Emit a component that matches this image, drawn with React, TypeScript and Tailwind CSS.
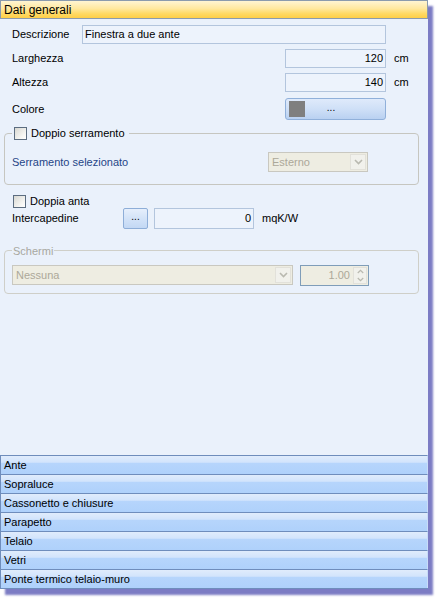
import React from 'react';

const font = { fontFamily: '"Liberation Sans", Arial, sans-serif' };

const sections = ['Ante', 'Sopraluce', 'Cassonetto e chiusure', 'Parapetto', 'Telaio', 'Vetri', 'Ponte termico telaio-muro'];

const Chevron: React.FC<{ up?: boolean; className?: string }> = ({ up, className }) => (
  <svg width="9" height="6" viewBox="0 0 9 6" className={className}>
    <polyline
      points={up ? '1,5 4.5,1.5 8,5' : '1,1 4.5,4.5 8,1'}
      fill="none"
      stroke="#b9b9b0"
      strokeWidth="1.6"
    />
  </svg>
);

const Checkbox: React.FC = () => (
  <span className="inline-block w-[13px] h-[13px] border border-[#5c6d80] bg-[linear-gradient(135deg,#d8d8d2,#f6f6f3_70%,#ffffff)]" />
);

const TextBox: React.FC<{ value: string; className: string; right?: boolean }> = ({ value, className, right }) => (
  <div
    className={`flex items-center border border-[#b3c5dd] bg-[#edf3fc] px-[2px] ${right ? 'justify-end' : ''} ${className}`}
  >
    {value}
  </div>
);

const DisabledSelect: React.FC<{ value: string; className: string }> = ({ value, className }) => (
  <div className={`flex items-stretch border border-[#c9c8c0] bg-[#eeede2] ${className}`}>
    <span className="flex-1 flex items-center pl-[3px] text-[#aca899]">{value}</span>
    <span className="w-[16px] m-[1px] flex items-center justify-center bg-[#f1f1ec] border border-[#e2e1da]">
      <Chevron />
    </span>
  </div>
);

const DotsButton: React.FC<{ className: string }> = ({ className }) => (
  <div
    className={`flex items-center justify-center rounded-[2px] border border-[#8eaed8] bg-[linear-gradient(#e6effc,#d3e3f8_50%,#c3d8f4)] text-[10px] leading-none pb-[3px] ${className}`}
  >
    ...
  </div>
);

export default function App() {
  return (
    <div className="w-[440px] h-[601px] bg-white text-[11px] text-black" style={font}>
      <div className="w-[428px] h-[589px] flex flex-col bg-[#eaf1fb] shadow-[5px_6px_2px_rgba(110,110,190,0.9)]">
        <div className="h-[19px] flex items-center pl-[3px] border border-[#8b9bad] bg-[linear-gradient(#fff5d3,#ffe89e_45%,#ffd963_75%,#ffcf47)] text-[12px]">
          Dati generali
        </div>

        <div className="flex-1 flex flex-col">
          <div className="mt-[6px] h-[19px] flex items-center pl-[12px]">
            <span className="w-[70px]">Descrizione</span>
            <TextBox value="Finestra a due ante" className="w-[304px] h-[19px]" />
          </div>

          <div className="mt-[5px] h-[19px] flex items-center pl-[12px]">
            <span className="w-[273px]">Larghezza</span>
            <TextBox value="120" right className="w-[101px] h-[19px]" />
            <span className="ml-[8px]">cm</span>
          </div>

          <div className="mt-[5px] h-[19px] flex items-center pl-[12px]">
            <span className="w-[273px]">Altezza</span>
            <TextBox value="140" right className="w-[101px] h-[19px]" />
            <span className="ml-[8px]">cm</span>
          </div>

          <div className="mt-[6px] h-[22px] flex items-center pl-[12px]">
            <span className="w-[273px]">Colore</span>
            <div className="w-[101px] h-[22px] flex items-center rounded-[3px] border border-[#90b0da] bg-[linear-gradient(#dfeafb,#cfe0f7_50%,#b9d1f1)] pl-[3px]">
              <span className="w-[16px] h-[16px] bg-[#7f7f7f]" />
              <span className="flex-1 text-center text-[10px] pb-[4px] pr-[28px]">...</span>
            </div>
          </div>

          <fieldset className="mt-[6px] ml-[4px] w-[415px] rounded-[4px] border border-[#c6c6c0] pl-[7px] pb-[12px]">
            <legend className="flex items-center gap-[4px] pl-[2px] pr-[4px] h-[14px]">
              <Checkbox />
              <span>Doppio serramento</span>
            </legend>
            <div className="mt-[12px] flex items-center h-[20px]">
              <span className="w-[256px] text-[#1f4587]">Serramento selezionato</span>
              <DisabledSelect value="Esterno" className="w-[100px] h-[20px]" />
            </div>
          </fieldset>

          <div className="mt-[9px] h-[14px] flex items-center gap-[4px] pl-[13px]">
            <Checkbox />
            <span>Doppia anta</span>
          </div>

          <div className="h-[21px] flex items-center pl-[12px]">
            <span className="w-[111px]">Intercapedine</span>
            <DotsButton className="w-[25px] h-[21px]" />
            <TextBox value="0" right className="ml-[6px] w-[100px] h-[21px]" />
            <span className="ml-[8px]">mqK/W</span>
          </div>

          <fieldset className="mt-[14px] ml-[4px] w-[415px] rounded-[4px] border border-[#cfcfc8] pl-[7px] pb-[7px]">
            <legend className="px-[1px] h-[14px] text-[#a8a8a0]">Schermi</legend>
            <div className="mt-[7px] flex items-center gap-[7px]">
              <DisabledSelect value="Nessuna" className="w-[281px] h-[20px]" />
              <div className="mt-[1px] w-[69px] h-[21px] flex items-stretch border border-[#7f9db9] bg-[#eeede2]">
                <span className="flex-1 flex items-center justify-end pr-[2px] text-[#aca899]">1.00</span>
                <span className="w-[14px] m-[1px] flex flex-col bg-[#f1f1ec] border border-[#e2e1da]">
                  <span className="flex-1 flex items-center justify-center"><Chevron up className="w-[7px] h-[5px]" /></span>
                  <span className="flex-1 flex items-center justify-center"><Chevron className="w-[7px] h-[5px]" /></span>
                </span>
              </div>
            </div>
          </fieldset>
        </div>

        <div className="flex flex-col">
          {sections.map((s) => (
            <div
              key={s}
              className="h-[19px] flex items-center pl-[3px] border-t border-l border-[#6f8dbc] border-r border-r-[#c8dcf8] bg-[linear-gradient(#e0ecfc,#d2e4fc_35%,#b6d5fc_40%,#afd1fb)] text-[11px]"
            >
              {s}
            </div>
          ))}
          <div className="h-[1px] bg-[#6f8dbc]" />
        </div>
      </div>
    </div>
  );
}
